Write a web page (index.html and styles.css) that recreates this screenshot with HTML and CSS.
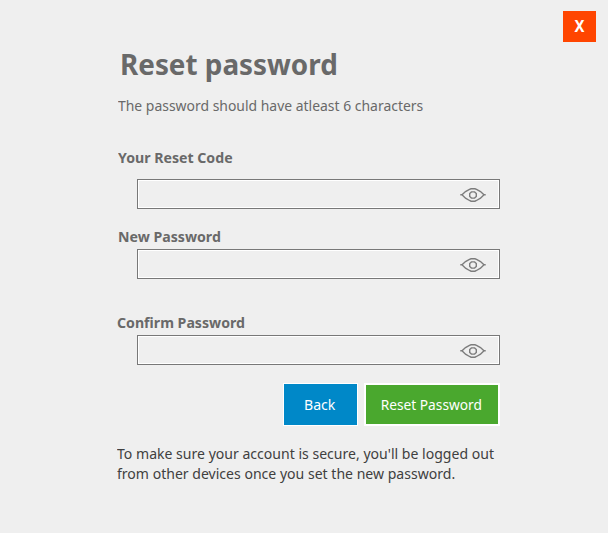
FILE: index.html
```
<!DOCTYPE html>
<html lang="en">
<head>
<meta charset="utf-8">
<title>Reset password</title>
<link rel="stylesheet" href="styles.css">
</head>
<body>
<svg class="defs" width="0" height="0" aria-hidden="true">
  <symbol id="eye" viewBox="0 0 26 14">
    <path d="M.3 6.8H2L5.5 3.6 9.5 1.4 11 .8H15L16.5 1.4 20.5 3.6 24 6.8H25.7M2 6.8L5.5 10.2 9.5 12.5 11 13.2H15L16.5 12.5 20.5 10.2 24 6.8"/>
    <path d="M11.4 3.9H14.6L16.3 5.6V8.4L14.6 10.1H11.4L9.7 8.4V5.6Z"/>
  </symbol>
</svg>
<button class="close" type="button"><span>X</span></button>
<main class="panel">
  <h1>Reset password</h1>
  <p class="hint">The password should have atleast 6 characters</p>
  <form>
    <div class="field code">
      <label for="code">Your Reset Code</label>
      <div class="box"><input id="code" type="password"><svg class="eye"><use href="#eye"/></svg></div>
    </div>
    <div class="field new">
      <label for="new">New Password</label>
      <div class="box"><input id="new" type="password"><svg class="eye"><use href="#eye"/></svg></div>
    </div>
    <div class="field confirm">
      <label for="confirm">Confirm Password</label>
      <div class="box"><input id="confirm" type="password"><svg class="eye"><use href="#eye"/></svg></div>
    </div>
    <div class="actions">
      <button class="back" type="button"><span>Back</span></button>
      <button class="reset" type="button"><span>Reset Password</span></button>
    </div>
  </form>
  <p class="note">To make sure your account is secure, you'll be logged out<br>from other devices once you set the new password.</p>
</main>
</body>
</html>
```
FILE: styles.css
```
* { box-sizing: border-box; }
body {
  margin: 0;
  height: 533px;
  overflow: hidden;
  background: #efefef;
  color: #696969;
  font: 15px/20px "Segoe UI", "Noto Sans", sans-serif;
}
.defs { display: block; }
button { font: inherit; color: #fff; padding: 0; border: 0; border-radius: 0; }
button span { display: inline-block; white-space: nowrap; }
.close {
  position: absolute;
  left: 563px;
  top: 11px;
  width: 33px;
  height: 31px;
  padding-bottom: 1px;
  background: #ff4500;
  font-size: 16px;
  font-weight: 700;
}
.close span { transform: scaleX(.93); }
.panel { width: 383px; margin-left: 117px; padding-top: 44px; }
h1, p, .field label { width: max-content; white-space: nowrap; transform-origin: 0 50%; }
h1 {
  margin: 0 0 11px 3px;
  font-size: 29px;
  line-height: 40px;
  font-weight: 700;
  transform: scaleX(.96);
}
p { margin: 0; }
.hint { margin-left: 1px; transform: scaleX(.929); }
form { margin-top: 32px; }
.field label { display: block; font-weight: 700; transform: scaleX(.943); }
.code label, .new label { margin-left: 1px; }
.box {
  display: flex;
  align-items: center;
  height: 30px;
  margin: 3px 0 0 20px;
  padding-right: 12px;
  border: 1px solid #787878;
  box-shadow: inset 0 0 0 1px #fff;
}
.code .box { margin-top: 12px; }
.new { margin-top: 17px; }
.confirm { margin-top: 33px; }
.box input { flex: 1; min-width: 0; height: 26px; border: 0; outline: 0; background: transparent; margin-left: 4px; }
.eye {
  width: 26px;
  height: 14px;
  margin-right: 1px;
  margin-top: 2px;
  fill: none;
  stroke: #7c7c7c;
  stroke-width: 1.4;
}
.actions { display: flex; justify-content: flex-end; gap: 6px; margin-top: 18px; }
.actions button { height: 43px; padding: 0 2px 1px 0; }
.back { width: 75px; background: #0088c8; border: 1px solid #fff; }
.back span { transform: scaleX(.94); }
.reset { width: 136px; background: #4aa82e; border: 2px solid #fff; }
.reset span { margin: 0 -10px; transform: scaleX(.915); }
.note { margin-top: 17px; color: #404040; transform: scaleX(.937); }
```
